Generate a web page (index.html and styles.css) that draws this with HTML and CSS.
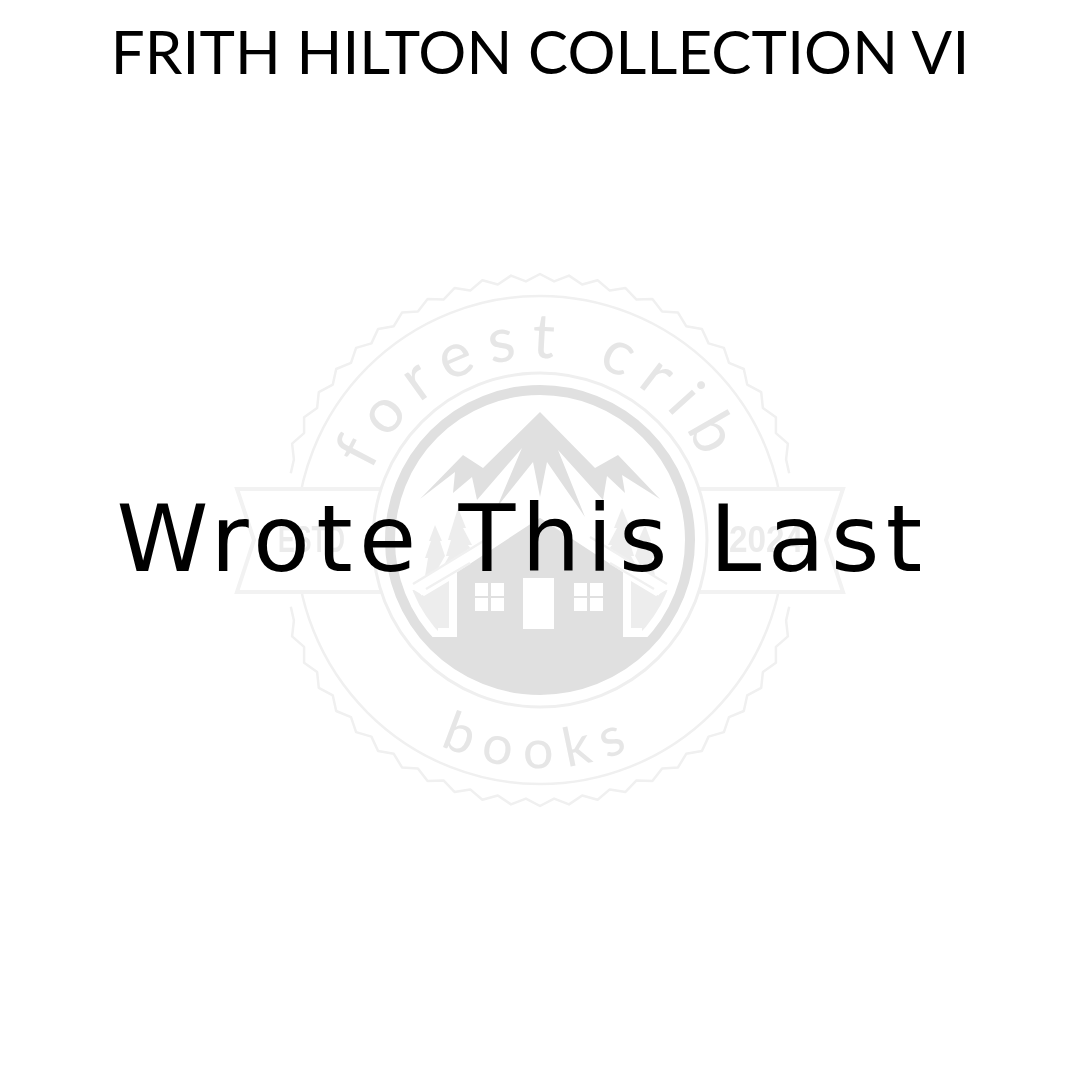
FILE: index.html
```html
<!DOCTYPE html>
<html lang="en">
<head>
<meta charset="utf-8">
<title>Wrote This Last</title>
<link rel="stylesheet" href="styles.css">
</head>
<body>
<main class="cover">
  <svg class="seal" viewBox="0 0 1080 1080" width="1080" height="1080" aria-hidden="true">
    <defs>
      <path id="arc-top" d="M358 540A182 182 0 0 1 722 540"/>
      <path id="arc-bottom" d="M312 540A228 228 0 0 0 768 540"/>
      <clipPath id="inner"><circle cx="540" cy="540" r="150"/></clipPath>
      <clipPath id="inner-light"><circle cx="540" cy="540" r="137"/></clipPath>
    </defs>

    <path class="scallop" data-from="-75" data-to="75"/>
    <path class="scallop" data-from="105" data-to="255"/>
    <circle class="thin" cx="540" cy="540" r="244"/>

    <polygon class="ribbon" points="237,489 843,489 826,540 843,592 237,592 254,540"/>
    <text class="year" x="278" y="552" textLength="67" lengthAdjust="spacingAndGlyphs">ESTD</text>
    <text class="year" x="729" y="552" textLength="74" lengthAdjust="spacingAndGlyphs">2024</text>

    <circle class="disc" cx="540" cy="540" r="167"/>
    <circle class="ring" cx="540" cy="540" r="150"/>

    <g clip-path="url(#inner-light)">
      <polygon class="light" points="396,590 414,590 424,596 449,581 449,640 396,640"/>
      <polygon class="light" points="684,590 666,590 656,596 631,581 631,640 684,640"/>
    </g>
    <g clip-path="url(#inner)">
      <rect class="solid" x="380" y="637" width="320" height="70"/>
      <polygon class="solid" points="540,514 457,566 457,640 623,640 623,566"/>
    </g>

    <polygon class="solid" points="540,412 595,468 618,455 660,499 622,475 625,493 607,476 603,500 558,450 585,517 547,462 540,497 533,462 497,507 522,448 477,500 472,477 453,493 455,472 420,499 463,455 483,468"/>

    <g class="trees">
      <polygon points="458,508 466,528 463,528 472,545 468,545 476,556 462,566 450,572 440,572 449,556 446,556 451,540 448,540"/>
      <polygon points="435,525 442,541 440,541 445,556 437,570 425,576 428,558 425,558 431,541 429,541"/>
      <polygon points="622,508 630,528 627,528 632,540 629,540 634,556 631,556 640,572 630,572 618,566 604,556 612,545 608,545 617,528 614,528"/>
      <polygon points="645,525 651,541 649,541 655,558 652,558 655,576 643,570 635,556 640,541 638,541"/>
    </g>

    <g class="roof">
      <path class="roof-white" d="M418 590L540 510L662 590"/>
      <path class="roof-edge" d="M413 584L490 537M667 584L590 537"/>
      <path class="roof-edge" d="M426 589L470 563M654 589L610 563"/>
    </g>

    <g class="cutouts">
      <polygon points="449,578 457,574 457,637 433,637 433,631 438,631 438,628 449,628"/>
      <polygon points="631,578 623,574 623,637 647,637 647,631 642,631 642,628 631,628"/>
      <rect x="475" y="583" width="13" height="13"/>
      <rect x="491" y="583" width="13" height="13"/>
      <rect x="475" y="598" width="13" height="13"/>
      <rect x="491" y="598" width="13" height="13"/>
      <rect x="574" y="583" width="13" height="13"/>
      <rect x="590" y="583" width="13" height="13"/>
      <rect x="574" y="598" width="13" height="13"/>
      <rect x="590" y="598" width="13" height="13"/>
      <rect x="523" y="578" width="31" height="51"/>
    </g>

    <text class="arc-word arc-word-top"><textPath href="#arc-top" startOffset="50%">forest crib</textPath></text>
    <text class="arc-word arc-word-bottom"><textPath href="#arc-bottom" startOffset="50%">books</textPath></text>
  </svg>

  <h2 class="series">FRITH HILTON COLLECTION VI</h2>
  <h1 class="book-title">Wrote This Last</h1>
</main>
<script src="scallop.js"></script>
</body>
</html>
```
FILE: styles.css
```css
html, body {
  margin: 0;
  background: #fff;
}

.cover {
  display: grid;
  width: 1080px;
  height: 1080px;
  overflow: hidden;
  background: #fff;
  color: #000;
  font-family: "Lato", "Noto Sans", sans-serif;
}

.cover > * {
  grid-area: 1 / 1;
  z-index: 1;
}

.cover > .seal {
  display: block;
  z-index: 0;
  filter: blur(0.5px);
}

.series {
  align-self: start;
  margin: 15px 0 0;
  font-size: 60px;
  line-height: 72px;
  font-weight: 400;
  letter-spacing: 0.15px;
  text-align: center;
  white-space: nowrap;
}

.book-title {
  align-self: start;
  margin: 483px 35px 0 0;
  font-family: "DejaVu Sans", sans-serif;
  font-size: 93px;
  line-height: 112px;
  font-weight: 400;
  letter-spacing: 6.3px;
  text-align: center;
  white-space: nowrap;
}

.scallop,
.thin {
  fill: none;
  stroke: #f0f0f0;
  stroke-width: 2.5;
  stroke-linejoin: round;
}

.ribbon {
  fill: #fff;
  stroke: #f2f2f2;
  stroke-width: 4;
}

.year {
  fill: #ebebeb;
  font-family: "Liberation Sans", sans-serif;
  font-size: 37px;
  font-weight: 700;
}

.disc {
  fill: #fff;
  stroke: #efefef;
  stroke-width: 3;
}

.ring {
  fill: #fff;
  stroke: #e0e0e0;
  stroke-width: 10;
}

.solid {
  fill: #e0e0e0;
}

.light,
.trees polygon {
  fill: #ededed;
}

.roof-white {
  fill: none;
  stroke: #fff;
  stroke-width: 13;
}

.roof-edge {
  fill: none;
  stroke: #f0f0f0;
  stroke-width: 2.5;
}

.cutouts {
  fill: #fff;
}

.arc-word {
  fill: #e6e6e6;
  font-family: "Lato", sans-serif;
  text-anchor: middle;
}

.arc-word-top {
  font-size: 62px;
  letter-spacing: 14px;
}

.arc-word-bottom {
  font-size: 54px;
  letter-spacing: 13px;
}
```
FILE: scallop.js
```js
document.querySelectorAll(".scallop").forEach(function (path) {
  var from = Number(path.dataset.from);
  var to = Number(path.dataset.to);
  var step = (to - from) / 48;
  var d = "";
  for (var i = 0; i <= 48; i++) {
    var r = i % 2 ? 259 : 266;
    if (i === 0 || i === 48) r = 258;
    var t = ((from + i * step) * Math.PI) / 180;
    var x = 540 + r * Math.sin(t);
    var y = 540 - r * Math.cos(t);
    d += (i ? "L" : "M") + x.toFixed(1) + " " + y.toFixed(1);
  }
  path.setAttribute("d", d);
});
```
